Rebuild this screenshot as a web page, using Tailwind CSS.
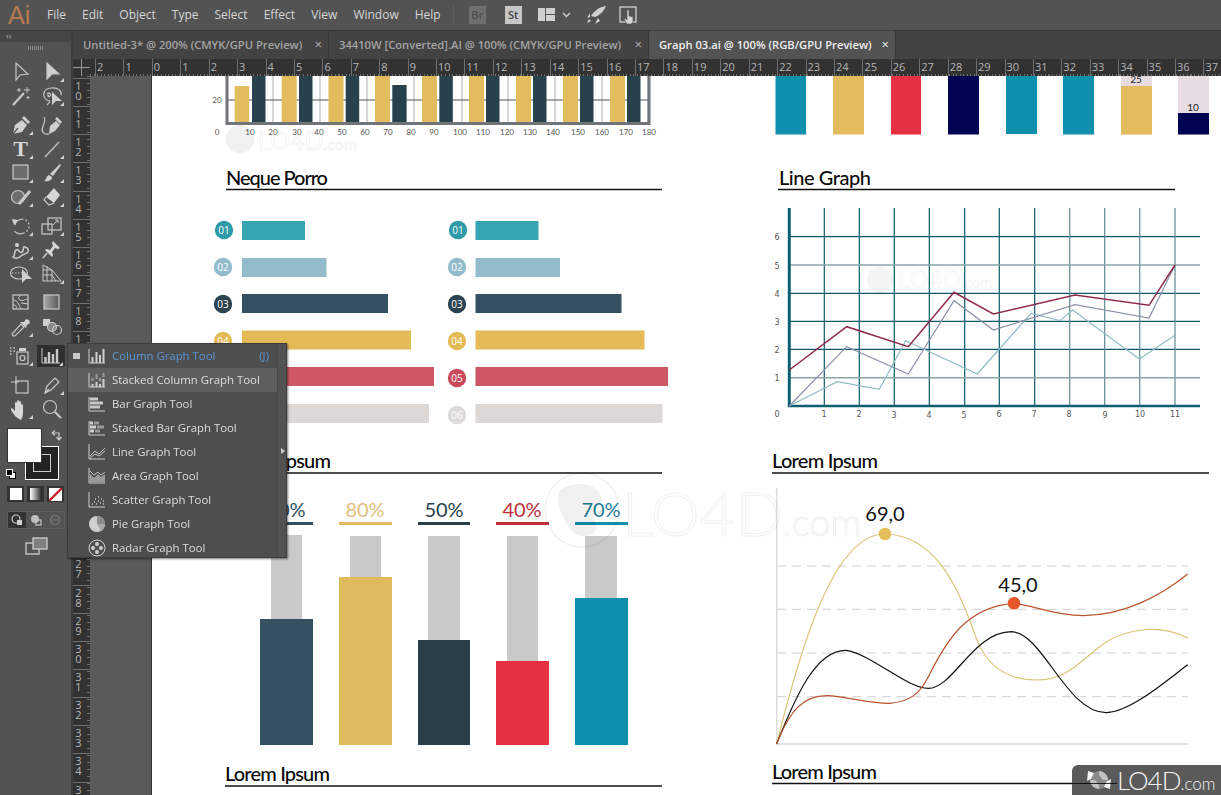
<!DOCTYPE html>
<html lang="en">
<head>
<meta charset="utf-8">
<title>Adobe Illustrator</title>
<script src="https://cdn.jsdelivr.net/npm/@tailwindcss/browser@4"></script>
</head>
<body class="m-0 bg-[#535353]">
<div class="relative w-[1221px] h-[795px] overflow-hidden flex flex-col bg-[#535353] font-['Open_Sans',sans-serif]">

  <!-- Menu bar -->
  <header class="h-[30px] shrink-0 flex items-center bg-[#535353] text-[#d6d6d6] text-[12px]">
    <span class="w-[47px] pl-[8px] text-[25px] leading-none text-[#b67a4e] font-['Liberation_Sans',sans-serif]">Ai</span>
    <nav class="flex gap-[16px]">
      <span>File</span><span>Edit</span><span>Object</span><span>Type</span><span>Select</span><span>Effect</span><span>View</span><span>Window</span><span>Help</span>
    </nav>
    <span class="ml-[12px] w-px h-[20px] bg-[#606060]"></span>
    <span class="ml-[15px] w-[17px] h-[18px] bg-[#6f6f6f] text-[#4e4e4e] text-[11px] font-semibold flex items-center justify-center">Br</span>
    <span class="ml-[19px] w-[17px] h-[18px] bg-[#c6c6c6] text-[#444] text-[11px] font-semibold flex items-center justify-center">St</span>
    <svg class="ml-[15px]" width="40" height="18" viewBox="0 0 40 18"><rect x="1" y="2" width="7" height="13" fill="#d0d0d0"/><rect x="9" y="2" width="9" height="6" fill="#d0d0d0"/><rect x="9" y="9" width="9" height="6" fill="#d0d0d0"/><path d="M26 7l3.5 3.5L33 7" fill="none" stroke="#d0d0d0" stroke-width="1.4"/></svg>
    <svg class="ml-[9px]" width="22" height="20" viewBox="0 0 22 20"><path d="M20 1C13 2 8 6 5 11l4 1C14 10 18 6 20 1zM4 8L1 13l3-1zM12 13l-3 6 5-3zM3 14l-2 4 4-2z" fill="#cfcfcf"/></svg>
    <svg class="ml-[10px]" width="20" height="20" viewBox="0 0 20 20"><rect x="2" y="2" width="16" height="15" fill="none" stroke="#cfcfcf" stroke-width="1.3"/><path d="M9 5h2v6l4 1v5l-2 2H9l-3-5 1-1 2 2z" fill="#d6d6d6" stroke="#535353" stroke-width=".6"/></svg>
  </header>

  <div class="flex-1 flex min-h-0">
    <!-- Tools panel -->
    <aside class="w-[73px] shrink-0 flex flex-col bg-[#535353] border-t border-[#3a3a3a] border-r-2 border-r-[#3e3e3e] fill-none stroke-[#c8c8c8] stroke-[1.2]">
      <div class="h-[11px] bg-[#454545] text-[#bdbdbd] text-[9px] leading-[10px] pl-[6px] stroke-0">‹‹</div>
      <div class="h-[18px] flex justify-center pt-[4px]"><span class="w-[16px] h-[4px] bg-[repeating-linear-gradient(90deg,#8a8a8a_0_1px,transparent_1px_2px)]"></span></div>

      <div class="grid grid-cols-[31px_31px] auto-rows-[24px] pl-[5px] place-items-center">
        <svg width="26" height="22" viewBox="0 0 26 22"><path d="M8 2v17l4-5 8-1z"/></svg>
        <svg width="26" height="22" viewBox="0 0 26 22"><path d="M8 2v16l5-5h7z" fill="#cfcfcf"/><path d="M25 17v4h-4z" fill="#d0d0d0" stroke="none"/></svg>
        <svg width="26" height="22" viewBox="0 0 26 22"><path d="M5 20L16 8" stroke-width="2.2"/><path d="M19 2v6M16 5h6M11 3v4M9 5h4M20 11v3M18.500 12.500h3" stroke-width="1"/></svg>
        <svg width="26" height="22" viewBox="0 0 26 22"><path d="M11 16C3 15 2 4 12 3c7-1 11 3 10 7M11 16c-1 2-2 3-3 4M8 9c2-2 5 0 3 2s-3-1-1-1" /><path d="M13 7v13l4-4h6z" fill="#cfcfcf" stroke="none"/><path d="M25 17v4h-4z" fill="#d0d0d0" stroke="none"/></svg>
      </div>
      <div class="mt-[5px] grid grid-cols-[31px_31px] auto-rows-[24px] pl-[5px] place-items-center">
        <svg width="26" height="22" viewBox="0 0 26 22"><path d="M5 20l2-9 7-5 5 5-5 7z" fill="#d0d0d0" stroke="none"/><path d="M16 2l6 6-2 2-6-6z" fill="#d0d0d0" stroke="none"/><path d="M5 20l5-6" stroke="#535353"/><path d="M25 17v4h-4z" fill="#d0d0d0" stroke="none"/></svg>
        <svg width="26" height="22" viewBox="0 0 26 22"><path d="M10 20l1-8 6-5 4 4-5 6z" fill="#d0d0d0" stroke="none"/><path d="M18 3l5 5-2 2-5-5z" fill="#d0d0d0" stroke="none"/><path d="M10 20c-6 1-8-3-6-8 1-3 3-6 1-9" /></svg>
        <div class="relative w-[26px] h-[22px] flex items-center justify-center"><span class="font-['Liberation_Serif',serif] font-bold text-[22px] leading-none text-[#d6d6d6]">T</span><svg class="absolute left-0 top-0" width="26" height="22" viewBox="0 0 26 22"><path d="M25 17v4h-4z" fill="#d0d0d0" stroke="none"/></svg></div>
        <svg width="26" height="22" viewBox="0 0 26 22"><path d="M6 19L20 4"/><path d="M25 17v4h-4z" fill="#d0d0d0" stroke="none"/></svg>
        <svg width="26" height="22" viewBox="0 0 26 22"><rect x="5" y="3" width="15" height="14" fill="#6d6d6d"/><path d="M25 17v4h-4z" fill="#d0d0d0" stroke="none"/></svg>
        <svg width="26" height="22" viewBox="0 0 26 22"><path d="M21 2l1 1-8 11-3-2z" fill="#d0d0d0" stroke="none"/><path d="M10 13c-3 1-2 4-5 6 5 1 8-1 8-4z" fill="#d0d0d0" stroke="none"/><path d="M25 17v4h-4z" fill="#d0d0d0" stroke="none"/></svg>
        <svg width="26" height="22" viewBox="0 0 26 22"><circle cx="10" cy="11" r="6.500" fill="#6d6d6d"/><path d="M11 18L22 5" stroke-width="3"/><path d="M25 17v4h-4z" fill="#d0d0d0" stroke="none"/></svg>
        <svg width="26" height="22" viewBox="0 0 26 22"><path d="M15 2l6 7-6 8-8-6z" fill="#d6d6d6" stroke="none"/><path d="M7 11l-2 3 5 5 5-2" /><path d="M25 17v4h-4z" fill="#d0d0d0" stroke="none"/></svg>
      </div>
      <div class="mt-[5px] grid grid-cols-[31px_31px] auto-rows-[24px] pl-[5px] place-items-center">
        <svg width="26" height="22" viewBox="0 0 26 22"><path d="M7 10c1-5 8-8 12-4s2 10-3 12-9 0-10-3" stroke-dasharray="9 0 2 2 2 2 2 2 2 2 2 2"/><path d="M4 4l6 1-4 5z" fill="#d0d0d0" stroke="none"/><path d="M25 17v4h-4z" fill="#d0d0d0" stroke="none"/></svg>
        <svg width="26" height="22" viewBox="0 0 26 22"><rect x="3" y="9" width="10" height="10"/><rect x="9" y="3" width="13" height="12"/><path d="M14 10l5-5M16 5h3v3" stroke-width="1"/><path d="M25 17v4h-4z" fill="#d0d0d0" stroke="none"/></svg>
        <svg width="26" height="22" viewBox="0 0 26 22"><path d="M5 18c3-1 0-5 3-7s3 4 6 2 0-6 3-5 4 3 3 5-5 2-7 4-6 3-8 1z" stroke-width="1.600"/><circle cx="9" cy="6" r="1.500" fill="#d0d0d0"/><path d="M25 17v4h-4z" fill="#d0d0d0" stroke="none"/></svg>
        <svg width="26" height="22" viewBox="0 0 26 22"><path d="M14 2l7 7-2 1-3-1-3 4 1 3-1 2-7-7 2-1 3 1 3-4-1-3z" fill="#d6d6d6" stroke="none"/><path d="M8 14l-4 5" stroke-width="1.600"/></svg>
        <svg width="26" height="22" viewBox="0 0 26 22"><ellipse cx="11" cy="10" rx="8.500" ry="6"/><path d="M4 10h11" stroke-dasharray="1.500 1.500"/><path d="M14 6v14l4-4h6z" fill="#d0d0d0" stroke="none"/></svg>
        <svg width="26" height="22" viewBox="0 0 26 22"><path d="M4 2l9 5v11H4zM4 7h9M4 12h9M8 3v15M13 7l9 11H13M13 12l4 6" stroke-width="1"/><path d="M25 17v4h-4z" fill="#d0d0d0" stroke="none"/></svg>
      </div>
      <div class="mt-[5px] grid grid-cols-[31px_31px] auto-rows-[24px] pl-[5px] place-items-center">
        <svg width="26" height="22" viewBox="0 0 26 22"><rect x="5" y="3" width="15" height="14"/><path d="M5 8c5 0 5 4 8 9M20 7c-4 0-5 3-8 1s0-3 0-5M8 17c1-3 0-4-3-4M13 11l7 1" stroke-width="1"/></svg>
        <svg width="26" height="22" viewBox="0 0 26 22"><defs><linearGradient id="g1" x1="0" x2="1" y1="0" y2="0"><stop offset="0" stop-color="#a8a8a8"/><stop offset="1" stop-color="#5a5a5a"/></linearGradient></defs><rect x="5" y="3" width="15" height="14" fill="url(#g1)"/></svg>
        <svg width="26" height="22" viewBox="0 0 26 22"><path d="M5 20l-1-2 9-10 3 3-9 9z"/><path d="M12 6l6 6 1-3 3-2-1-3-3-1-2 3z" fill="#d0d0d0" stroke="none"/><path d="M25 17v4h-4z" fill="#d0d0d0" stroke="none"/></svg>
        <svg width="26" height="22" viewBox="0 0 26 22"><rect x="4" y="3" width="7" height="7" fill="#d0d0d0" stroke="none"/><circle cx="13" cy="11" r="4.500" fill="#8a8a8a"/><circle cx="18" cy="14" r="4.500"/></svg>
      </div>
      <div class="mt-[5px] grid grid-cols-[31px_31px] auto-rows-[24px] pl-[5px] place-items-center">
        <svg width="26" height="22" viewBox="0 0 26 22"><path d="M2 3h1.500M5.500 3H7M2 6h1.500M5.500 6H7M2 9h1.500" stroke-width="1.500"/><rect x="9" y="7" width="11" height="12"/><circle cx="14.500" cy="13" r="2.500"/><rect x="11" y="3" width="7" height="3" fill="#d0d0d0" stroke="none"/><path d="M25 17v4h-4z" fill="#d0d0d0" stroke="none"/></svg>
        <div class="w-[28px] h-[22px] bg-[#2f2f2f] flex items-center justify-center relative -ml-[1px]"><svg width="26" height="22" viewBox="0 0 26 22"><path d="M4 3v15h18" stroke-width="1"/><path d="M7.500 18v-6M11 18V7M15 18v-9M19 18V4" stroke-width="2.400"/><path d="M25 17v4h-4z" fill="#d0d0d0" stroke="none"/></svg></div>
      </div>
      <div class="mt-[5px] grid grid-cols-[31px_31px] auto-rows-[24px] pl-[5px] place-items-center">
        <svg width="26" height="22" viewBox="0 0 26 22"><rect x="8" y="7" width="12" height="12"/><path d="M3 8h8M8 2v8" stroke-width="1"/></svg>
        <svg width="26" height="22" viewBox="0 0 26 22"><path d="M6 19l2-7 8-8 4 4-8 8z"/><path d="M6 19l4-4"/><path d="M25 17v4h-4z" fill="#d0d0d0" stroke="none"/></svg>
        <svg width="26" height="22" viewBox="0 0 26 22"><path d="M8 19C6 16 3 13 3 11c0-1 2-1 3 1l1 1V5c0-1 2-1 2 0v4-6c0-1 2-1 2 0v6-5c0-1 2-1 2 0v6-3c0-1 2-1 2 0v8c0 3-1 5-2 7z" fill="#d6d6d6" stroke="none"/><path d="M25 17v4h-4z" fill="#d0d0d0" stroke="none"/></svg>
        <svg width="26" height="22" viewBox="0 0 26 22"><circle cx="11" cy="9" r="6.500"/><path d="M16 14l6 6" stroke-width="2"/></svg>
      </div>

      <!-- Fill and stroke -->
      <div class="relative h-[58px] mt-[7px]">
        <div class="absolute left-[25px] top-[18px] w-[34px] h-[34px] bg-[#222] border border-white flex items-center justify-center"><span class="w-[18px] h-[18px] border border-[#cfcfcf]"></span></div>
        <div class="absolute left-[7px] top-0 w-[35px] h-[35px] bg-white border border-[#333]"></div>
        <svg class="absolute left-[50px] top-[1px]" width="13" height="13" viewBox="0 0 13 13"><path d="M2 4h7v7M2 4l3-2.500M2 4l3 2.500M9 11L6.500 8M9 11l2.500-3" stroke-width="1.200"/></svg>
        <span class="absolute left-[9px] top-[44px] w-[7px] h-[7px] bg-white border border-black"></span>
        <span class="absolute left-[6px] top-[41px] w-[7px] h-[7px] bg-black border border-white"></span>
      </div>
      <div class="flex h-[16px] ml-[7px] gap-[3px]">
        <span class="w-[17px] h-[16px] bg-[#333] flex items-center justify-center"><span class="w-[12px] h-[12px] bg-white"></span></span>
        <span class="w-[17px] h-[16px] bg-[#333] flex items-center justify-center"><span class="w-[12px] h-[12px] bg-[linear-gradient(90deg,#fff,#222)]"></span></span>
        <span class="w-[17px] h-[16px] bg-[#333] flex items-center justify-center"><svg width="13" height="13" viewBox="0 0 13 13"><rect width="13" height="13" fill="#fff" stroke="none"/><path d="M0 13L13 0" stroke="#c8222c" stroke-width="2.400"/></svg></span>
      </div>
      <div class="flex h-[18px] mt-[9px] ml-[7px] w-[58px] border border-[#5e5e5e]">
        <span class="w-[18px] bg-[#333] flex items-center justify-center"><svg width="12" height="12" viewBox="0 0 12 12"><circle cx="5" cy="5" r="4"/><rect x="6" y="6" width="5" height="5" fill="#d0d0d0" stroke="none"/></svg></span>
        <span class="w-[20px] flex items-center justify-center"><svg width="12" height="12" viewBox="0 0 12 12"><circle cx="5" cy="5" r="4" fill="#bdbdbd" stroke="none"/><rect x="6" y="6" width="5" height="5"/></svg></span>
        <span class="w-[18px] flex items-center justify-center opacity-40"><svg width="12" height="12" viewBox="0 0 12 12"><circle cx="6" cy="6" r="4.500"/><path d="M3 6h6" stroke-width="1"/></svg></span>
      </div>
      <svg class="ml-[25px] mt-[8px]" width="23" height="18" viewBox="0 0 23 18"><rect x="1" y="6" width="13" height="11" stroke="#cfcfcf" stroke-width="1.300"/><rect x="8" y="1" width="14" height="11" fill="#7f7f7f" stroke="#cfcfcf" stroke-width="1.300"/></svg>
    </aside>

    <div class="flex-1 min-w-0 flex flex-col">
      <!-- Document tabs -->
      <div class="h-[29px] shrink-0 flex bg-[#434343] border-t border-[#3a3a3a] text-[11.2px] font-semibold text-[#a3a3a3]">
        <div class="w-[256px] pl-[10px] pr-[6px] flex items-center justify-between border-r border-[#363636]"><span>Untitled-3* @ 200% (CMYK/GPU Preview)</span><span class="text-[13px] font-normal text-[#b5b5b5]">×</span></div>
        <div class="w-[320px] pl-[10px] pr-[6px] flex items-center justify-between border-r border-[#363636]"><span>34410W [Converted].AI @ 100% (CMYK/GPU Preview)</span><span class="text-[13px] font-normal text-[#b5b5b5]">×</span></div>
        <div class="w-[247px] pl-[10px] pr-[6px] flex items-center justify-between bg-[#535353] text-[#eeeeee] border-r border-[#363636]"><span>Graph 03.ai @ 100% (RGB/GPU Preview)</span><span class="text-[13px] font-normal">×</span></div>
      </div>
      <!-- Horizontal ruler -->
      <div class="h-[17px] shrink-0 flex bg-[#323232] relative overflow-hidden">
        <svg class="absolute left-[0px] top-0" width="17" height="17" viewBox="0 0 17 17"><path d="M0 8.500H17M8.500 0V17" stroke="#9a9a9a" fill="none"/></svg>
        <div class="ml-[22px] flex text-[11px] leading-[15px] text-[#b5b5b5] *:w-[28.43px] *:shrink-0 *:pl-[1px] *:border-l *:border-[#6f6f6f] *:h-[17px]">
          <span>2</span><span>1</span><span>0</span><span>1</span><span>2</span><span>3</span><span>4</span><span>5</span><span>6</span><span>7</span><span>8</span><span>9</span><span>10</span><span>11</span><span>12</span><span>13</span><span>14</span><span>15</span><span>16</span><span>17</span><span>18</span><span>19</span><span>20</span><span>21</span><span>22</span><span>23</span><span>24</span><span>25</span><span>26</span><span>27</span><span>28</span><span>29</span><span>30</span><span>31</span><span>32</span><span>33</span><span>34</span><span>35</span><span>36</span><span>37</span>
        </div>
        <span class="absolute left-[17px] right-0 bottom-0 h-[2px] bg-[repeating-linear-gradient(90deg,#6f6f6f_0_1px,transparent_1px_3.55px)]"></span>
      </div>
      <div class="flex-1 flex min-h-0">
        <!-- Vertical ruler -->
        <div class="w-[17px] shrink-0 bg-[#323232] relative overflow-hidden pt-[2px] text-[11px] leading-[10px] text-[#b5b5b5] text-center *:block *:h-[28.15px] *:border-t *:border-[#6f6f6f] *:pr-[6px] *:pt-[2px]">
          <span>1<br>0</span><span>1<br>1</span><span>1<br>2</span><span>1<br>3</span><span>1<br>4</span><span>1<br>5</span><span>1<br>6</span><span>1<br>7</span><span>1<br>8</span><span>1<br>9</span><span>2<br>0</span><span>2<br>1</span><span>2<br>2</span><span>2<br>3</span><span>2<br>4</span><span>2<br>5</span><span>2<br>6</span><span>2<br>7</span><span>2<br>8</span><span>2<br>9</span><span>3<br>0</span><span>3<br>1</span><span>3<br>2</span><span>3<br>3</span><span>3<br>4</span><span>3<br>5</span>
          <i class="!absolute right-0 top-0 bottom-0 !h-auto w-[3px] !p-0 !border-0 bg-[repeating-linear-gradient(180deg,#6f6f6f_0_1px,transparent_1px_7px)]"></i>
        </div>
        <!-- Pasteboard -->
        <div class="w-[62px] shrink-0 bg-[#5a5a5a] border-r border-[#333]"></div>
        <!-- Artboard: free canvas, drawn in screen coordinates -->
        <div class="flex-1 min-w-0 bg-white overflow-hidden">
          <svg width="1069" height="719" viewBox="152 76 1069 719" class="block">
            <g font-family="Lato, sans-serif">
            <!-- Top-left column chart -->
            <rect x="226" y="76" width="423" height="48" fill="#fff"/>
            <g stroke="#b9bcbe" stroke-width="1.200"><path d="M273 76v47M320 76v47M367 76v47M414 76v47M462 76v47M508 76v47M555 76v47M602 76v47M648 76v47"/></g>
            <path d="M226 100H649" stroke="#555" stroke-width="1"/>
            <g fill="#e2bc5d"><rect x="234.700" y="86" width="14.500" height="37"/><rect x="281.700" y="76" width="15" height="47"/><rect x="328.500" y="76" width="15" height="47"/><rect x="375" y="76" width="15" height="47"/><rect x="422" y="76" width="15" height="47"/><rect x="469" y="76" width="15" height="47"/><rect x="516" y="76" width="15" height="47"/><rect x="563" y="76" width="15" height="47"/><rect x="610" y="76" width="15" height="47"/></g>
            <g fill="#27414d"><rect x="252" y="76" width="13.500" height="47"/><rect x="299" y="76" width="13.500" height="47"/><rect x="345.700" y="76" width="13.500" height="47"/><rect x="392.300" y="85" width="14.300" height="38"/><rect x="439.300" y="76" width="13.500" height="47"/><rect x="486" y="76" width="13.500" height="47"/><rect x="533" y="76" width="13.500" height="47"/><rect x="580" y="76" width="13.500" height="47"/><rect x="627" y="76" width="13.500" height="47"/></g>
            <path d="M227 76v47.500H649V76" fill="none" stroke="#6f7578" stroke-width="3"/>
            <g font-size="8" fill="#555" text-anchor="middle"><text x="217" y="103">20</text><text x="217" y="135">0</text><text x="250" y="135">10</text><text x="273" y="135">20</text><text x="297" y="135">30</text><text x="319" y="135">40</text><text x="342" y="135">50</text><text x="365" y="135">60</text><text x="388" y="135">70</text><text x="411" y="135">80</text><text x="434" y="135">90</text><text x="460" y="135">100</text><text x="483" y="135">110</text><text x="507" y="135">120</text><text x="530" y="135">130</text><text x="553" y="135">140</text><text x="578" y="135">150</text><text x="602" y="135">160</text><text x="626" y="135">170</text><text x="649" y="135">180</text></g>

            <!-- Top-right column chart -->
            <rect x="775.500" y="76" width="30.500" height="58.500" fill="#0f8fae"/>
            <rect x="833" y="76" width="31" height="58.500" fill="#e2bc5d"/>
            <rect x="891" y="76" width="30" height="58.500" fill="#e53042"/>
            <rect x="948" y="76" width="31" height="58.500" fill="#010452"/>
            <rect x="1006" y="76" width="31" height="58" fill="#0f8fae"/>
            <rect x="1063" y="76" width="31" height="58.500" fill="#0f8fae"/>
            <rect x="1121" y="76" width="31" height="58.500" fill="#e6dce2"/><rect x="1121" y="86" width="31" height="48.500" fill="#e2bc5d"/>
            <rect x="1178" y="76" width="31" height="58.500" fill="#e6dce2"/><rect x="1178" y="113" width="31" height="21.500" fill="#010452"/>
            <text x="1136" y="83" font-size="10" fill="#222" text-anchor="middle">25</text>
            <text x="1193" y="111" font-size="10" fill="#222" text-anchor="middle">10</text>

            <!-- Headings -->
            <g font-size="20" fill="#0a0a0a" font-weight="500">
              <text x="226" y="185" textLength="102">Neque Porro</text>
              <text x="779" y="185" textLength="92">Line Graph</text>
              <text x="226" y="468" textLength="105">Lorem Ipsum</text>
              <text x="772" y="468" textLength="106">Lorem Ipsum</text>
              <text x="225" y="781" textLength="105">Lorem Ipsum</text>
              <text x="772" y="779" textLength="105">Lorem Ipsum</text>
            </g>
            <g stroke="#111" stroke-width="1.500"><path d="M226 189.500H662M778 189.500H1175M226 473H662M772 473H1209M225 786H662M772 783.500H1080"/></g>

            <!-- Numbered bars -->
            <g>
              <rect x="242" y="221" width="63" height="19" fill="#35a5b1"/><rect x="242" y="258" width="84.500" height="19" fill="#92bccb"/><rect x="242" y="294" width="146" height="19" fill="#345061"/><rect x="242" y="330.500" width="169" height="19" fill="#e4ba57"/><rect x="242" y="367" width="192" height="19" fill="#cf5866"/><rect x="242" y="404" width="187" height="19" fill="#dbd8d6"/>
              <rect x="475.500" y="221" width="63" height="19" fill="#35a5b1"/><rect x="475.500" y="258" width="84.500" height="19" fill="#92bccb"/><rect x="475.500" y="294" width="146" height="19" fill="#345061"/><rect x="475.500" y="330.500" width="169" height="19" fill="#e4ba57"/><rect x="475.500" y="367" width="192.500" height="19" fill="#cf5866"/><rect x="475.500" y="404" width="187" height="19" fill="#dbd8d6"/>
              <circle cx="224" cy="230" r="9.200" fill="#2f9aa8"/><circle cx="223" cy="267" r="9.200" fill="#92bccb"/><circle cx="223" cy="304" r="9.200" fill="#2d4452"/><circle cx="223" cy="341" r="9.200" fill="#e4ba57"/>
              <circle cx="458" cy="230" r="9.200" fill="#2f9aa8"/><circle cx="457" cy="267" r="9.200" fill="#92bccb"/><circle cx="457" cy="304" r="9.200" fill="#2d4452"/><circle cx="457" cy="341" r="9.200" fill="#e4ba57"/><circle cx="457" cy="378" r="9.200" fill="#c94a5b"/><circle cx="457" cy="415" r="9.200" fill="#dcdada"/>
              <g font-size="10" fill="#fff" text-anchor="middle" font-family="'Open Sans', sans-serif">
                <text x="224" y="234">01</text><text x="223" y="271">02</text><text x="223" y="308">03</text><text x="223" y="345">04</text>
                <text x="458" y="234">01</text><text x="457" y="271">02</text><text x="457" y="308">03</text><text x="457" y="345">04</text><text x="457" y="382">05</text><text x="457" y="419">06</text>
              </g>
            </g>

            <!-- Line graph -->
            <g fill="none" stroke-width="1.200">
              <g stroke="#0c5a66"><path d="M824.300 208V406M859.300 208V406M894.300 208V406M929.300 208V406M964.700 208V406M999.300 208V406M1034.700 208V406"/><path d="M789 236.700H1200M789 293.300H1200M789 321.300H1200M789 349.300H1200"/></g>
              <g stroke="#5e8a90"><path d="M1069.700 208V406M1104.700 208V406M1139.700 208V406M1175 208V406"/></g>
              <g stroke="#8ca5a9" stroke-width="1.500"><path d="M789 265H1200M789 377.700H1200"/></g>
              <path d="M789.300 208V407" stroke="#0c5f6e" stroke-width="3"/>
              <path d="M788 406H1200" stroke="#0c5f6e" stroke-width="2.500"/>
              <path d="M789.300 406L837.300 381.700 879.300 389.300 905.700 340.700 977.300 374 1031 313.300 1060 320.700 1072.700 310 1139.300 359 1175 335.300" stroke="#8fbcc4"/>
              <path d="M789.300 406L846.700 346.700 908.300 374 954 300.700 993.300 330 1075 304.700 1149 318 1175 265" stroke="#8a92a8"/>
              <path d="M789.300 370L846.700 326.700 908.300 346.700 954 292.300 993.300 314 1075 295 1149 305.300 1175 265" stroke="#8e2a4a" stroke-width="1.500"/>
            </g>
            <g font-size="8" fill="#555" text-anchor="middle" font-family="'DejaVu Sans', sans-serif">
              <text x="777" y="240">6</text><text x="777" y="269">5</text><text x="777" y="297">4</text><text x="777" y="325">3</text><text x="777" y="353">2</text><text x="777" y="381">1</text>
              <text x="777" y="417">0</text><text x="824" y="417">1</text><text x="859" y="417">2</text><text x="894" y="418">3</text><text x="929" y="418">4</text><text x="964" y="418">5</text><text x="999" y="417">6</text><text x="1034" y="417">7</text><text x="1069" y="417">8</text><text x="1105" y="418">9</text><text x="1140" y="417">10</text><text x="1175" y="417">11</text>
            </g>

            <!-- Percent columns -->
            <g fill="#c9c9c9"><rect x="271" y="535" width="31" height="85"/><rect x="350" y="536" width="31" height="42"/><rect x="428" y="536" width="32" height="105"/><rect x="507" y="536" width="31" height="126"/><rect x="585" y="536" width="32" height="63"/></g>
            <rect x="260" y="619" width="53" height="126" fill="#345061"/>
            <rect x="339" y="577" width="53" height="168" fill="#e0bb5d"/>
            <rect x="418" y="640" width="52" height="105" fill="#2b3f4a"/>
            <rect x="496" y="661" width="53" height="84" fill="#e5303f"/>
            <rect x="575" y="598" width="53" height="147" fill="#0f8fae"/>
            <g stroke-width="3"><path d="M260 523.500H313" stroke="#345061"/><path d="M339 523.500H392" stroke="#e0bb5d"/><path d="M418 523.500H470" stroke="#2b3f4a"/><path d="M496 523.500H549" stroke="#c5303f"/><path d="M575 523.500H628" stroke="#0f8fae"/></g>
            <g font-size="20" text-anchor="middle"><text x="286" y="517" fill="#345061">60%</text><text x="365" y="517" fill="#dfc080">80%</text><text x="444" y="517" fill="#2b3f4a">50%</text><text x="522" y="517" fill="#bd2f3f">40%</text><text x="601" y="517" fill="#1d7f9a">70%</text></g>

            <!-- Curve chart -->
            <path d="M776.700 488V744H1188" fill="none" stroke="#dcdcdc" stroke-width="1.500"/>
            <path d="M777 566H1188M777 609.300H1188M777 653H1188M777 696.700H1188" stroke="#cfcfcf" stroke-width="1" stroke-dasharray="9 6"/>
            <g transform="translate(760 450) scale(.33333)" fill="none" stroke-width="3.600">
              <path d="M50 882C120 600 220 250 375 252C520 255 590 400 640 540C670 640 730 690 830 690C930 690 970 620 1040 575C1100 538 1200 520 1285 565" stroke="#d8c578"/>
              <path d="M50 882C110 730 170 600 258 601C330 610 440 715 505 715C580 715 640 545 755 545C850 550 920 790 1040 788C1110 785 1210 700 1283 644" stroke="#111"/>
              <path d="M50 882C90 780 130 735 205 737C270 742 340 762 390 760C450 755 480 730 505 680C560 570 620 470 762 460C820 465 880 497 970 497C1090 495 1200 440 1283 372" stroke="#b9542f"/>
            </g>
            <circle cx="885" cy="534" r="6.300" fill="#e4bf5c"/>
            <circle cx="1014" cy="603.300" r="6.300" fill="#e5572a"/>
            <g font-size="20" fill="#111" text-anchor="middle"><text x="885" y="521">69,0</text><text x="1018" y="592">45,0</text></g>

            <!-- Watermarks -->
            <g opacity=".06">
              <circle cx="582" cy="510" r="37" fill="none" stroke="#000" stroke-width="1.500"/><path d="M560 490c15-10 40-8 42 10-4 8-10 10-6 24 2 8-8 16-20 10-12-8-22-34-16-44z" fill="#000"/>
              <text x="622" y="536" font-size="62" fill="none" stroke="#000" font-weight="300">LO4D<tspan font-size="38">.com</tspan></text>
              <circle cx="240" cy="139" r="14" fill="#000"/>
              <text x="258" y="150" font-size="25" fill="none" stroke="#000" stroke-width=".8">LO4D<tspan font-size="16">.com</tspan></text>
              <circle cx="880" cy="280" r="13" fill="#000" opacity=".7"/>
              <text x="898" y="288" font-size="24" fill="none" stroke="#000" stroke-width=".8" opacity=".7">LO4D<tspan font-size="15">.com</tspan></text>
            </g>
            </g>
          </svg>
        </div>
      </div>
    </div>
  </div>

  <!-- Graph tool flyout -->
  <div class="absolute left-[67px] top-[343px] w-[220px] h-[215px] bg-[#4e4e4e] border border-[#3d3d3d] shadow-[1px_1px_2px_rgba(0,0,0,.5)] text-[11.4px] text-[#dcdcdc] fill-none stroke-[#cfcfcf]">
    <span class="absolute right-0 top-0 bottom-0 w-[9px] bg-[#525252] border-l border-[#474747]"></span>
    <span class="absolute right-[1px] top-[104px] w-0 h-0 border-y-[3px] border-y-transparent border-l-[4px] border-l-[#cfcfcf]"></span>
    <ul class="w-[209px] *:h-[24px] *:flex *:items-center">
      <li class="text-[#5b96d4]"><span class="w-[7px] h-[6px] ml-[5px] mr-[7px] bg-[#c8c8c8]"></span><svg class="mr-[5px]" width="20" height="20" viewBox="0 0 20 20"><path d="M2 3v14h16" /><path d="M5.500 17v-6M9.500 17V6M13 17v-8M16.500 17V3" stroke-width="2"/></svg><span class="flex-1">Column Graph Tool</span><span class="mr-[8px]">(J)</span></li>
      <li class="bg-[#5f5f5f]"><svg class="ml-[19px] mr-[5px]" width="20" height="20" viewBox="0 0 20 20"><path d="M2 3v14h16"/><path d="M5.500 17v-3M9.500 17v-5M13 17v-3M16.500 17V9" stroke-width="2"/><path d="M5.500 11V8M9.500 9V4M13 11V8M16.500 7V3" stroke="#9a9a9a" stroke-width="2"/></svg><span>Stacked Column Graph Tool</span></li>
      <li><svg class="ml-[19px] mr-[5px]" width="20" height="20" viewBox="0 0 20 20"><path d="M2 3v14h16M2 17"/><path d="M3 5h8M3 9h13M3 13h10" stroke="#c8c8c8" stroke-width="3"/></svg><span>Bar Graph Tool</span></li>
      <li><svg class="ml-[19px] mr-[5px]" width="20" height="20" viewBox="0 0 20 20"><path d="M2 3v14h16"/><path d="M3 5h3M3 9h6M3 13h4" stroke="#cfcfcf" stroke-width="3"/><path d="M7 5h5M10 9h7M8 13h5" stroke="#999" stroke-width="3"/></svg><span>Stacked Bar Graph Tool</span></li>
      <li><svg class="ml-[19px] mr-[5px]" width="20" height="20" viewBox="0 0 20 20"><path d="M2 2v15h16"/><path d="M3 14l5-5 4 3 6-6M3 16l5-4 4 2 6-5" stroke-width=".9"/></svg><span>Line Graph Tool</span></li>
      <li><svg class="ml-[19px] mr-[5px]" width="20" height="20" viewBox="0 0 20 20"><path d="M2 2v15h16"/><path d="M3 8l4 4 4-4 3 3 4-3v8H3z" fill="#9a9a9a" stroke="none"/><path d="M3 5l4 4 4-3 3 3 4-3" stroke-width=".9"/></svg><span>Area Graph Tool</span></li>
      <li><svg class="ml-[19px] mr-[5px]" width="20" height="20" viewBox="0 0 20 20"><path d="M2 2v15h16"/><path d="M5 14h1M7 12h1M9 14h1M8 9h1M11 11h1M11 7h1M13 13h1M14 9h1M16 11h1M16 14h1" stroke-width="1.400"/></svg><span>Scatter Graph Tool</span></li>
      <li><svg class="ml-[19px] mr-[5px]" width="20" height="20" viewBox="0 0 20 20"><circle cx="10" cy="10" r="8" fill="#cfcfcf" stroke="none"/><path d="M10 10V2a8 8 0 0 1 8 8z" fill="#8c8c8c" stroke="none"/><path d="M10 10h8a8 8 0 0 1-4 7z" fill="#a8a8a8" stroke="none"/></svg><span>Pie Graph Tool</span></li>
      <li><svg class="ml-[19px] mr-[5px]" width="20" height="20" viewBox="0 0 20 20"><circle cx="10" cy="10" r="8"/><g fill="#cfcfcf" stroke="none"><circle cx="10" cy="6" r="2"/><circle cx="6" cy="10" r="2"/><circle cx="14" cy="10" r="2"/><circle cx="10" cy="14" r="2"/></g></svg><span>Radar Graph Tool</span></li>
    </ul>
  </div>

  <!-- Site badge -->
  <div class="absolute right-0 bottom-0 w-[149px] h-[30px] rounded-tl-[6px] bg-[#5a5a5a] flex items-center text-[#f2f2f2] font-['Lato',sans-serif] font-light">
    <svg class="ml-[11px]" width="32" height="26" viewBox="0 0 32 26"><circle cx="16" cy="13" r="9" fill="#8a8a8a"/><path d="M16 4a9 9 0 0 1 9 9h-5l-4-5zM16 22a9 9 0 0 1-9-9h5l4 5z" fill="#c2c2c2"/><path d="M5 4l6 2-3 6-4 2zM27 22l-6-2 3-6 4-2z" fill="#f2f2f2"/></svg>
    <span class="ml-[2px] text-[26px] leading-none tracking-[-1px]">LO4D</span><span class="text-[17px] leading-none mt-[6px]">.com</span>
  </div>
  <span class="absolute left-[1072px] top-[783px] w-[45px] h-[1px] bg-black/80"></span>
</div>
</body>
</html>
